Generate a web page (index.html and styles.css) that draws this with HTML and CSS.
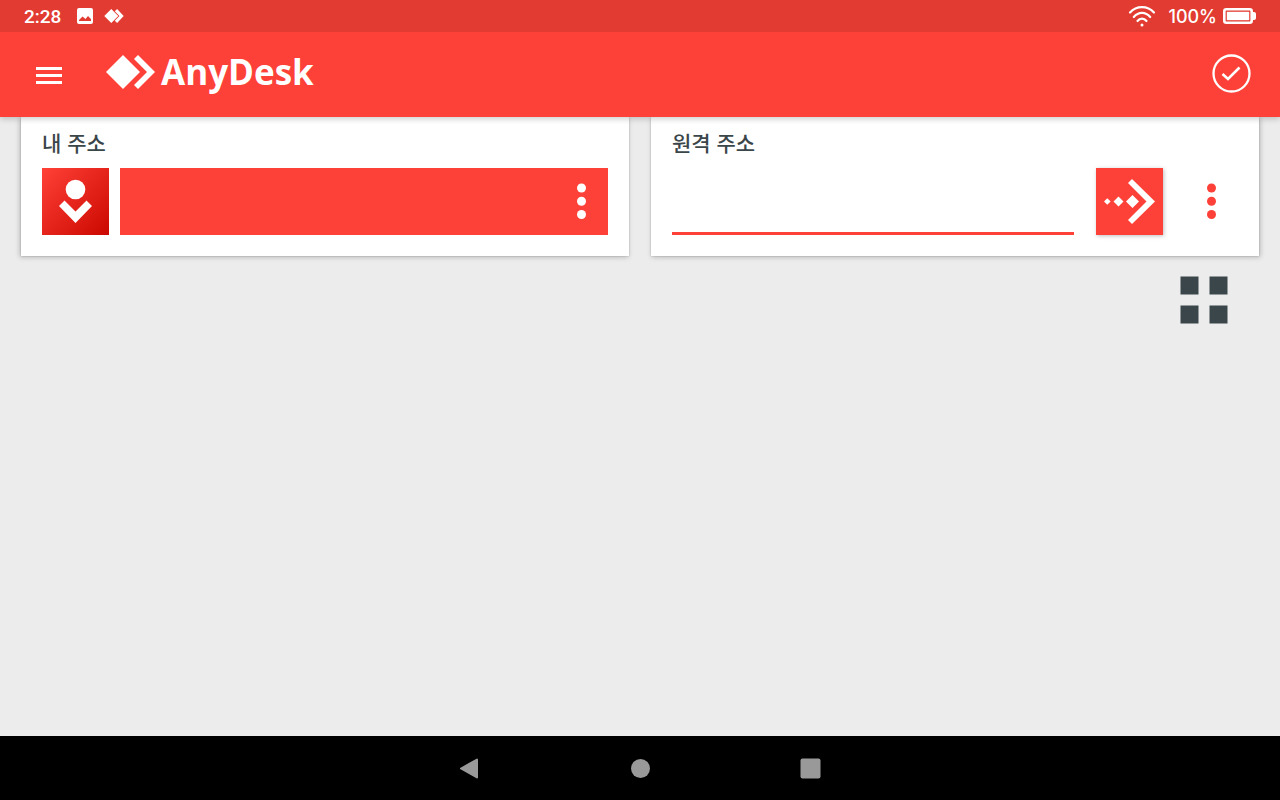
FILE: index.html
```html
<!DOCTYPE html>
<html lang="ko">
<head>
<meta charset="utf-8">
<meta name="viewport" content="width=device-width, initial-scale=1">
<title>AnyDesk</title>
<link rel="stylesheet" href="styles.css">
</head>
<body>
<div class="screen">
  <div class="status-bar">
    <div class="status-group">
      <span class="clock">2:28</span>
      <svg class="status-photo" width="16" height="16" viewBox="0 0 16 16" aria-hidden="true"><path fill="#fff" fill-rule="evenodd" d="M2 0h12a2 2 0 0 1 2 2v12a2 2 0 0 1-2 2H2a2 2 0 0 1-2-2V2a2 2 0 0 1 2-2zM2 13h12v-2l-3-3-2.500 3L5.500 8.500 2 12z"/></svg>
      <svg class="status-app" width="20" height="14" viewBox="0 0 50 36" aria-hidden="true"><path fill="#fff" d="M0 18 18 0l18 18-18 18zM27 6l6-6 17 18-17 18-6-6 12-12z"/></svg>
    </div>
    <div class="status-group">
      <svg class="wifi" width="28" height="22" viewBox="0 0 28 22" aria-hidden="true"><g fill="none" stroke="#fff" stroke-width="2.200" stroke-linecap="round"><path d="M2 7.500C8.500.200 19.500.200 26 7.500"/><path d="M5.800 12C10.500 6.500 17.500 6.500 22.200 12"/><path d="M9.500 16C12 12.800 16 12.800 18.500 16"/></g><circle cx="14" cy="20" r="1.500" fill="#fff"/></svg>
      <span class="charge">100%</span>
      <svg width="33" height="16" viewBox="0 0 33 16" aria-hidden="true"><rect x="1.300" y="1.300" width="27.400" height="13.400" rx="2" fill="none" stroke="#fff" stroke-width="2.600"/><rect x="3.800" y="3.800" width="22.400" height="8.400" fill="#fff"/><path fill="#fff" d="M29 4h2a2 2 0 0 1 2 2v4a2 2 0 0 1-2 2h-2z"/></svg>
    </div>
  </div>
  <header class="app-bar">
    <button class="icon-button menu-button" type="button" aria-label="메뉴"><svg width="26" height="17" viewBox="0 0 26 17"><path fill="#fff" d="M0 0h26v3H0zM0 7h26v3H0zM0 14h26v3H0z"/></svg></button>
    <div class="brand">
      <svg width="49" height="34" viewBox="0 0 49 34" aria-hidden="true"><path fill="#fff" d="M0 17 17 0l17 17-17 17zM28 4l4-4 17 17-17 17-4-4 13-13z"/></svg>
      <span class="brand-name">AnyDesk</span>
    </div>
    <button class="icon-button" type="button" aria-label="확인"><svg width="39" height="39" viewBox="0 0 39 39"><circle cx="19.500" cy="19.500" r="18" fill="none" stroke="#fff" stroke-width="2.300"/><path d="m10.500 20 5.500 5L27.500 13.500" fill="none" stroke="#fff" stroke-width="2.600"/></svg></button>
  </header>
  <main class="content">
    <div class="cards">
      <section class="card">
        <h2 class="card-title">내 주소</h2>
        <div class="card-row local-row">
          <div class="avatar"><svg width="67" height="67" viewBox="0 0 67 67" aria-hidden="true"><circle cx="33.500" cy="21.500" r="9.800" fill="#fff"/><path fill="#fff" d="m17 38 5.500-5.500 11 11 11-11L50 38 33.500 55z"/></svg></div>
          <div class="local-address">
            <button class="icon-button more-button" type="button" aria-label="내 주소 옵션"><svg width="10" height="37" viewBox="0 0 10 37"><circle cx="5.500" cy="5" r="4.500"/><circle cx="5.500" cy="18.200" r="4.500"/><circle cx="5.500" cy="31.500" r="4.500"/></svg></button>
          </div>
        </div>
      </section>
      <section class="card">
        <h2 class="card-title"><label for="remote">원격 주소</label></h2>
        <div class="card-row">
          <input class="remote-input" id="remote" type="text">
          <button class="connect-button" type="button" aria-label="연결"><svg width="67" height="67" viewBox="0 0 67 67"><path fill="#fff" d="m32 15 4-4 23 22.500L36 56l-4-4 18.500-18.500zM30 33.500l6.500-6.500 6.500 6.500-6.500 6.500zM17.500 33.500l5-5 5 5-5 5zM8 33.500l3.300-3.300 3.300 3.300-3.300 3.300z"/></svg></button>
          <button class="icon-button more-button accent" type="button" aria-label="원격 주소 옵션"><svg width="10" height="37" viewBox="0 0 10 37"><circle cx="5.500" cy="5" r="4.500"/><circle cx="5.500" cy="18.200" r="4.500"/><circle cx="5.500" cy="31.500" r="4.500"/></svg></button>
        </div>
      </section>
    </div>
    <div class="view-tools">
      <button class="icon-button" type="button" aria-label="격자 보기"><svg width="48" height="48" viewBox="0 0 48 48"><path fill="#3b464a" d="M.500.500h18v18H.500zM29.500.500h18v18h-18zM.500 29.500h18v18H.500zM29.500 29.500h18v18h-18z"/></svg></button>
    </div>
  </main>
  <nav class="nav-bar">
    <button class="icon-button nav-button" type="button" aria-label="뒤로"><svg width="22" height="22" viewBox="0 0 22 22"><path d="M2 11.500 18 2.500v18z" fill="#999" stroke="#999" stroke-width="2" stroke-linejoin="round"/></svg></button>
    <button class="icon-button nav-button" type="button" aria-label="홈"><svg width="22" height="22" viewBox="0 0 22 22"><circle cx="11.500" cy="11.500" r="9.500" fill="#999"/></svg></button>
    <button class="icon-button nav-button" type="button" aria-label="최근 앱"><svg width="22" height="22" viewBox="0 0 22 22"><rect x="1.500" y="1.500" width="20" height="20" rx="2" fill="#999"/></svg></button>
  </nav>
</div>
</body>
</html>
```
FILE: styles.css
```css
:root {
  --red: #fe4138;
  --ink: #3b464a;
}

* {
  box-sizing: border-box;
}

body {
  margin: 0;
  font-family: Roboto, "Noto Sans CJK KR", sans-serif;
  color: var(--ink);
  background: #ececec;
}

svg {
  display: block;
  flex: none;
}

.screen {
  display: flex;
  flex-direction: column;
  min-height: 100vh;
}

.status-bar {
  display: flex;
  align-items: center;
  justify-content: space-between;
  height: 32px;
  padding: 0 24px;
  color: #fff;
  background: #e23b31;
}

.status-group {
  display: flex;
  align-items: center;
}

.clock {
  font-size: 19px;
  font-weight: 500;
}

.status-photo {
  margin-left: 16px;
}

.status-app {
  margin-left: 11px;
}

.wifi {
  margin-right: 12px;
}

.charge {
  margin-right: 6px;
  font-family: Inter, sans-serif;
  font-size: 18px;
  font-weight: 500;
}

.icon-button {
  display: flex;
  align-items: center;
  justify-content: center;
  padding: 0;
  border: 0;
  background: none;
  cursor: pointer;
}

.app-bar {
  position: relative;
  display: flex;
  align-items: center;
  height: 85px;
  padding: 0 29px 2px 36px;
  background: var(--red);
  box-shadow: 0 2px 6px rgba(0, 0, 0, 0.2);
  clip-path: inset(0 0 -12px);
}

.menu-button {
  padding-top: 3px;
}

.brand {
  display: flex;
  flex: 1;
  align-items: center;
  gap: 6px;
  margin-left: 44px;
  padding-bottom: 3px;
}

.brand-name {
  font-family: "Open Sans", "Noto Sans", sans-serif;
  font-size: 35px;
  font-weight: 700;
  line-height: 40px;
  color: #fff;
}

.content {
  flex: 1;
}

.cards {
  display: grid;
  grid-template-columns: 1fr 1fr;
  gap: 22px;
  padding: 0 21px;
}

.card {
  padding: 10px 21px 21px;
  background: #fff;
  box-shadow: 0 0 1px rgba(0, 0, 0, 0.3), 0 1px 5px rgba(0, 0, 0, 0.2);
}

.card:first-child {
  box-shadow: 0 0 1px rgba(0, 0, 0, 0.3), -1px 1px 5px rgba(0, 0, 0, 0.25);
}

.card:last-child {
  box-shadow: 0 0 1px rgba(0, 0, 0, 0.3), 1px 1px 5px rgba(0, 0, 0, 0.25);
}

.card-title {
  margin: 0 0 11px;
  font-family: "Noto Sans CJK KR", sans-serif;
  font-size: 21px;
  font-weight: 500;
  line-height: 30px;
}

.card-row {
  display: flex;
  height: 67px;
}

.local-row {
  gap: 11px;
}

.avatar {
  flex: none;
  background: linear-gradient(135deg, #ff4138, #cb0800);
}

.local-address {
  display: flex;
  flex: 1;
  justify-content: flex-end;
  color: #fff;
  background: var(--red);
}

.more-button {
  width: 54px;
  color: inherit;
}

.more-button svg {
  fill: currentColor;
}

.accent {
  color: var(--red);
}

.remote-input {
  flex: 1;
  min-width: 0;
  margin-right: 22px;
  padding: 0;
  border: 0;
  border-bottom: 3px solid var(--red);
  border-radius: 0;
  outline: 0;
  font-size: 28px;
  color: var(--ink);
  background: none;
}

.connect-button {
  flex: none;
  margin-right: 21px;
  padding: 0;
  border: 0;
  background: var(--red);
  box-shadow: 1px 1px 4px rgba(0, 0, 0, 0.25);
  cursor: pointer;
}

.view-tools {
  display: flex;
  justify-content: flex-end;
  padding: 20px 52px;
}

.nav-bar {
  display: flex;
  align-items: center;
  justify-content: center;
  gap: 106px;
  height: 64px;
  background: #000;
}

.nav-button {
  width: 64px;
  height: 64px;
}
```
